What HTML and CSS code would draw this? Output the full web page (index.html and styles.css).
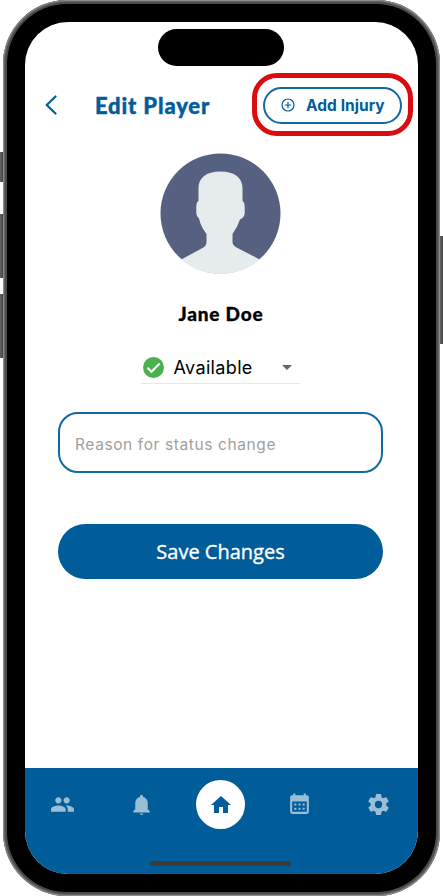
FILE: index.html
```html
<!DOCTYPE html>
<html lang="en">
<head>
<meta charset="utf-8">
<title>Edit Player</title>
<link rel="stylesheet" href="styles.css">
</head>
<body>
<div class="device">
  <span class="key key-silent"></span>
  <span class="key key-up"></span>
  <span class="key key-down"></span>
  <span class="key key-power"></span>
  <div class="bezel">
    <div class="screen">
      <div class="island"></div>
      <header class="header">
        <svg class="back" viewBox="0 0 14 20"><path d="M11.500 1.500 2.700 10 11.500 18.500" fill="none" stroke="currentColor" stroke-width="2.200" stroke-linecap="round" stroke-linejoin="round"/></svg>
        <h1 class="title">Edit Player</h1>
        <div class="highlight">
          <button class="add">
            <svg class="plus" viewBox="0 0 14 14" fill="none" stroke="currentColor" stroke-width="1.200"><circle cx="7" cy="7" r="6"/><path d="M7 3.700v6.600M3.700 7h6.600"/></svg>
            <span>Add Injury</span>
          </button>
        </div>
      </header>
      <main class="main">
        <svg class="avatar" viewBox="0 0 121 121">
          <circle cx="60.500" cy="60.500" r="60" fill="#566080"/>
          <path fill="#e6ecec" d="M60.500 18.500C46 18.500 38.500 25 38.500 35V48Q36.300 49 36.300 54V60Q36.300 63.500 39 65.500Q41 74 46.500 81V89Q46.500 93 42.500 95L21.200 106.500A60.600 60.600 0 0 0 99.800 106.500L77.500 95Q72.500 92.500 72.500 89V81Q77.500 74 80 66.500Q84.700 64 84.700 60V54Q84.700 49 82.500 48V35C82.500 25 75 18.500 60.500 18.500Z"/>
        </svg>
        <h2 class="name">Jane Doe</h2>
        <div class="status">
          <svg class="check" viewBox="2 2 20 20"><circle cx="12" cy="12" r="10" fill="#4caf50"/><path d="m6.200 12.200 3.900 3.900 7.700-7.900" fill="none" stroke="#fff" stroke-width="1.900"/></svg>
          <span class="status-text">Available</span>
          <svg class="caret" viewBox="0 0 10 5"><path d="M0 0h10L5 5z" fill="#666"/></svg>
        </div>
        <div class="field"><span>Reason for status change</span></div>
        <button class="save"><span>Save Changes</span></button>
      </main>
      <nav class="nav">
        <svg class="icon" viewBox="0 0 24 24"><path d="M16 11c1.660 0 2.990-1.340 2.990-3S17.660 5 16 5s-3 1.340-3 3 1.340 3 3 3zm-8 0c1.660 0 2.990-1.340 2.990-3S9.660 5 8 5 5 6.340 5 8s1.340 3 3 3zm0 2c-2.330 0-7 1.170-7 3.500V19h14v-2.500c0-2.330-4.670-3.500-7-3.500zm8 0c-.29 0-.62.020-.97.050 1.160.84 1.970 1.970 1.970 3.450V19h6v-2.500c0-2.330-4.670-3.500-7-3.500z"/></svg>
        <svg class="icon" viewBox="0 0 24 24"><path d="M20 18.500v1.200H4v-1.200l2-2v-5.800c0-3 1.600-5.200 4.500-5.900v-.6a1.500 1.500 0 0 1 3 0v.6c2.900.7 4.500 2.900 4.500 5.900v5.800l2 2zm-6.200 2.200a1.900 1.900 0 0 1-3.600 0"/></svg>
        <div class="active"><svg class="icon" viewBox="0 0 24 24"><path d="M10 20v-6h4v6h5v-8h3L12 3 2 12h3v8z"/></svg></div>
        <svg class="icon" viewBox="0 0 24 24"><path d="M9 11v2H7v-2h2zm4 0v2h-2v-2h2zm4 0v2h-2v-2h2zM9 15v2H7v-2h2zm4 0v2h-2v-2h2zm4 0v2h-2v-2h2zM19 3a2 2 0 0 1 2 2v14a2 2 0 0 1-2 2H5a2 2 0 0 1-2-2V5c0-1.110.9-2 2-2h1V1.500h2V3h8V1.500h2V3h1zm0 16V9H5v10h14z"/></svg>
        <svg class="icon" viewBox="0 0 24 24"><path d="M12 15.500A3.500 3.500 0 0 1 8.500 12 3.500 3.500 0 0 1 12 8.500a3.500 3.500 0 0 1 3.500 3.500 3.500 3.500 0 0 1-3.500 3.500m7.430-2.530c.04-.32.07-.64.07-.97s-.03-.66-.07-1l2.110-1.630c.19-.15.24-.42.12-.64l-2-3.460c-.12-.22-.39-.31-.61-.22l-2.490 1c-.52-.39-1.060-.73-1.690-.98l-.37-2.650A.506.506 0 0 0 14 2h-4c-.25 0-.46.18-.5.42l-.37 2.650c-.63.25-1.170.59-1.690.98l-2.490-1c-.22-.09-.49 0-.61.22l-2 3.460c-.13.22-.07.49.12.64L4.570 11c-.04.34-.07.67-.07 1s.03.65.07.97l-2.110 1.660c-.19.15-.25.42-.12.64l2 3.460c.12.22.39.3.61.22l2.490-1.010c.52.4 1.060.74 1.690.99l.37 2.650c.04.24.25.42.5.42h4c.25 0 .46-.18.5-.42l.37-2.650c.63-.26 1.170-.59 1.690-.99l2.490 1.010c.22.08.49 0 .61-.22l2-3.460c.12-.22.07-.49-.12-.64l-2.110-1.660z"/></svg>
      </nav>
      <div class="home-bar"></div>
    </div>
  </div>
</div>
</body>
</html>
```
FILE: styles.css
```css
* { box-sizing: border-box; }
body { margin: 0; background: #fff; overflow: hidden; }
h1, h2 { margin: 0; }
button { font: inherit; padding: 0; border: 0; }
svg { display: block; flex: none; }

.device {
  position: relative;
  width: 437px;
  height: 896px;
  margin-left: 3px;
  padding: 4px;
  border-radius: 64px;
  background: #4c4c4c;
  box-shadow: inset 0 0 0 1px #888b8b, inset 0 0 0 2px #666;
}
.key { position: absolute; width: 3px; background: linear-gradient(90deg, #666, #424242); }
.key-silent { left: -3px; top: 152px; height: 30px; }
.key-up { left: -3px; top: 214px; height: 64px; }
.key-down { left: -3px; top: 294px; height: 64px; }
.key-power { right: -3px; top: 236px; height: 108px; }

.bezel { height: 888px; padding: 18px; border-radius: 60px; background: #000; }
.screen {
  position: relative;
  display: flex;
  flex-direction: column;
  height: 852px;
  overflow: hidden;
  border-radius: 43px;
  background: #fff;
}
.island { flex: none; width: 126px; height: 37px; margin: 7px 0 0 132.500px; border-radius: 19px; background: #000; }

.header { display: flex; align-items: center; height: 63px; margin-top: 7px; color: #005d99; }
.back { width: 14px; height: 20px; margin-left: 19px; }
.title {
  width: 157px;
  margin: 2px 0 0 37px;
  font: 900 22px/30px Lato, sans-serif;
  letter-spacing: .85px;
  white-space: nowrap;
  -webkit-text-stroke: .4px currentColor;
}
.highlight { flex: none; width: 161px; height: 63px; padding: 9px 6px; border: 5px solid #dc0b0f; border-radius: 25px; }
.add {
  display: flex;
  align-items: center;
  width: 139px;
  height: 37px;
  padding-left: 15.500px;
  border: 2px solid #1268a2;
  border-radius: 19px;
  background: #fff;
  color: #005d99;
  font: 700 15.500px/20px Inter, sans-serif;
  letter-spacing: .05px;
  white-space: nowrap;
}
.plus { width: 14px; height: 14px; margin-right: 11.500px; margin-top: -1px; }

.main { display: flex; flex-direction: column; align-items: center; height: 632px; padding-top: 17px; }
.avatar { width: 121px; height: 121px; margin-right: 2px; }
.name { margin: 27px 1px 0 0; font: 900 19px/26px Lato, sans-serif; letter-spacing: .8px; -webkit-text-stroke: .3px currentColor; }
.status {
  display: flex;
  align-items: center;
  width: 159px;
  height: 32px;
  margin: 25px 2px 0 0;
  padding-left: 2px;
  border-bottom: 1px solid #e8e8e8;
}
.check { width: 21px; height: 21px; }
.status-text { width: 108.500px; margin: 1px 0 0 9.500px; font: 400 18px/24px Inter, sans-serif; letter-spacing: .35px; }
.caret { width: 10px; height: 5px; }
.field {
  display: flex;
  align-items: center;
  width: 325px;
  height: 61px;
  margin: 28px 2px 0 0;
  padding: 4px 0 0 15px;
  border: 2px solid #1268a2;
  border-radius: 20px;
  color: #a0a0a0;
  font: 400 15.500px/22px Inter, sans-serif;
  letter-spacing: .6px;
}
.save {
  width: 325px;
  height: 55px;
  margin: 51px 2px 0 0;
  padding-top: 1px;
  border-radius: 28px;
  background: #005d99;
  color: #fff;
  font: 500 20px/28px "Open Sans", sans-serif;
  -webkit-text-stroke: .35px currentColor;
}
.nav {
  display: grid;
  grid-template-columns: repeat(5, 79px);
  justify-items: center;
  align-items: start;
  justify-content: center;
  height: 106px;
  padding: 12px 2px 0 0;
  background: #005d99;
  fill: #99bed6;
}
.icon { width: 25px; height: 25px; }
.nav > .icon { margin-top: 12px; }
.active { display: grid; place-items: center; width: 49px; height: 49px; border-radius: 50%; background: #fff; fill: #005d99; }
.active .icon { width: 24px; height: 24px; }
.home-bar { position: absolute; left: 125px; bottom: 8px; width: 141px; height: 5px; border-radius: 3px; background: #3b3b3b; }
```
